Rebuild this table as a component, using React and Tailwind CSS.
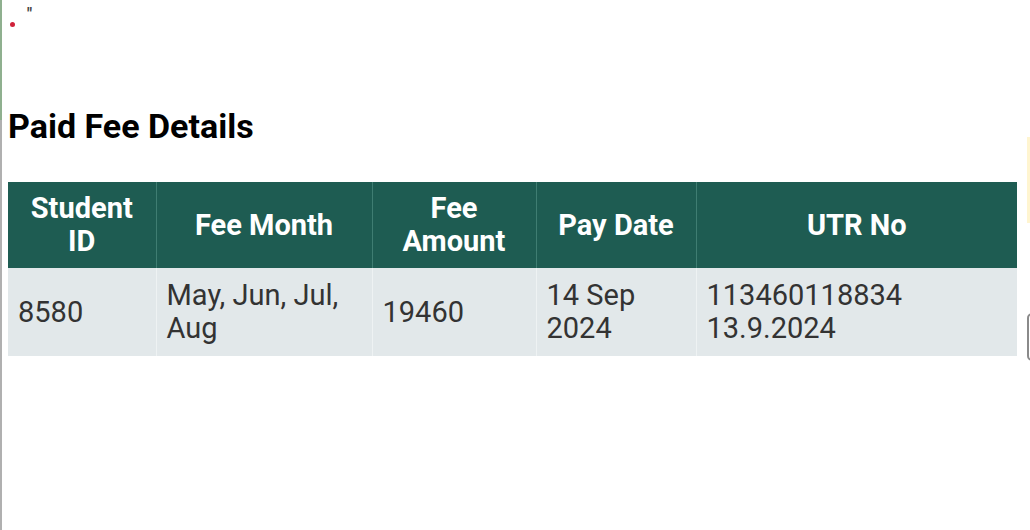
import React from 'react';

const rows = [
  { id: '8580', month: 'May, Jun, Jul, Aug', amount: '19460', date: '14 Sep 2024', utr: '113460118834 13.9.2024' },
];

const cols = [
  { key: 'id', label: 'Student ID', w: 'w-[148px]' },
  { key: 'month', label: 'Fee Month', w: 'w-[216px]' },
  { key: 'amount', label: 'Fee Amount', w: 'w-[164px]' },
  { key: 'date', label: 'Pay Date', w: 'w-[160px]' },
  { key: 'utr', label: 'UTR No', w: 'w-[321px]' },
];

export default function App() {
  return (
    <div className="relative w-[1030px] h-[530px] bg-white overflow-hidden font-['Roboto',sans-serif]">
      {/* left edge strip */}
      <div className="absolute left-0 top-0 w-[2px] h-[120px] bg-[#8fb08f]" />
      <div className="absolute left-0 top-[120px] w-[2px] h-[410px] bg-[#b0b0b0]" />

      {/* right edge leftovers */}
      <div className="absolute left-[1027px] top-[137px] w-[3px] h-[86px] bg-[#fff5d0]" />
      <div className="absolute left-[1027px] top-[313px] w-[10px] h-[48px] rounded-md border-2 border-[#8a8a8a] bg-white" />

      <div className="flex items-start h-[40px] pl-[10px] pt-[6px]">
        <span className="mt-[16px] w-[5px] h-[5px] rounded-full bg-[#d0223a]" />
        <span className="ml-[12px] text-[16px] leading-none text-[#444] font-bold">"</span>
      </div>

      <div className="px-[8px]">
        <h2 className="mt-[66px] text-[34px] leading-[40px] font-bold text-black">Paid Fee Details</h2>

        <table className="mt-[36px] w-[1009px] table-fixed border-collapse text-[29px] leading-[33px]">
          <thead>
            <tr className="bg-[#1e5c52] text-white">
              {cols.map((c) => (
                <th
                  key={c.key}
                  className={`${c.w} h-[86px] px-[10px] font-bold text-center border-x border-[#3f7d72] first:border-l-0 last:border-r-0`}
                >
                  {c.label}
                </th>
              ))}
            </tr>
          </thead>
          <tbody>
            {rows.map((r) => (
              <tr key={r.id} className="bg-[#e2e8ea] text-[#333]">
                {cols.map((c) => (
                  <td
                    key={c.key}
                    className={`${c.w} h-[88px] px-[10px] font-normal text-left border-x border-[#eef2f3] first:border-l-0 last:border-r-0`}
                  >
                    {r[c.key]}
                  </td>
                ))}
              </tr>
            ))}
          </tbody>
        </table>
      </div>
    </div>
  );
}
